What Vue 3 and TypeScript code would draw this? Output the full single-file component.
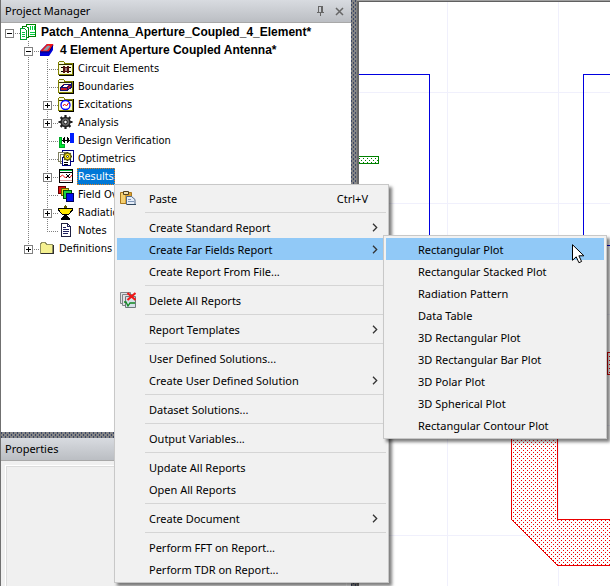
<script setup lang="ts">
import { ref } from 'vue'

interface TreeLeaf {
  label: string
  icon: string
  expandable: boolean
}

interface MenuEntry {
  label: string
  icon?: string
  shortcut?: string
  submenu?: string[]
  more?: boolean
}

const designItems: TreeLeaf[] = [
  { label: 'Circuit Elements', icon: 'circuit', expandable: false },
  { label: 'Boundaries', icon: 'boundaries', expandable: false },
  { label: 'Excitations', icon: 'excitations', expandable: true },
  { label: 'Analysis', icon: 'gear', expandable: true },
  { label: 'Design Verification', icon: 'verify', expandable: false },
  { label: 'Optimetrics', icon: 'optimetrics', expandable: false },
  { label: 'Results', icon: 'results', expandable: true },
  { label: 'Field Overlays', icon: 'overlays', expandable: false },
  { label: 'Radiation', icon: 'radiation', expandable: true },
  { label: 'Notes', icon: 'notes', expandable: false },
]

const plots: string[] = [
  'Rectangular Plot',
  'Rectangular Stacked Plot',
  'Radiation Pattern',
  'Data Table',
  '3D Rectangular Plot',
  '3D Rectangular Bar Plot',
  '3D Polar Plot',
  '3D Spherical Plot',
  'Rectangular Contour Plot',
]

const menuGroups: MenuEntry[][] = [
  [{ label: 'Paste', icon: 'paste', shortcut: 'Ctrl+V' }],
  [
    { label: 'Create Standard Report', more: true },
    { label: 'Create Far Fields Report', more: true, submenu: plots },
    { label: 'Create Report From File...' },
  ],
  [{ label: 'Delete All Reports', icon: 'delete' }],
  [{ label: 'Report Templates', more: true }],
  [{ label: 'User Defined Solutions...' }, { label: 'Create User Defined Solution', more: true }],
  [{ label: 'Dataset Solutions...' }],
  [{ label: 'Output Variables...' }],
  [{ label: 'Update All Reports' }, { label: 'Open All Reports' }],
  [{ label: 'Create Document', more: true }],
  [{ label: 'Perform FFT on Report...' }, { label: 'Perform TDR on Report...' }],
]

const selected = ref('Results')
const activeEntry = ref('Create Far Fields Report')
const activePlot = ref('Rectangular Plot')
</script>

<template>
  <div class="app">
    <div class="docks">
      <section class="dock">
        <header class="dock-title">
          <h2>Project Manager</h2>
          <button type="button" class="tool" aria-label="Auto hide">
            <svg width="9" height="10" viewBox="0 0 9 10" shape-rendering="crispEdges">
              <path d="M2 .5h5M2.500 0v6M5.500 0v6M6.500 0v6M1 6.500h7M4.500 7v3" fill="none" stroke="#666" />
            </svg>
          </button>
          <button type="button" class="tool" aria-label="Close">
            <svg width="9" height="9" viewBox="0 0 9 9">
              <path d="M1 1l7 7M8 1l-7 7" fill="none" stroke="#666" stroke-width="1.500" />
            </svg>
          </button>
        </header>

        <ul class="tree">
          <li>
            <div class="row">
              <button type="button" class="expander" aria-label="Collapse project">
                <svg width="9" height="9" viewBox="0 0 9 9" shape-rendering="crispEdges">
                  <path d="M.5.5h8v8h-8z" fill="#fff" stroke="#808080" /><path d="M2 4.500h5" stroke="#000" />
                </svg>
              </button>
              <svg class="icon" width="16" height="16" viewBox="0 0 16 16" shape-rendering="crispEdges">
                <path d="M6.500.5h9v12h-9z" fill="#fff" stroke="#008000" />
                <path d="M10 2h1v4h-1zM12 2h1v4h-1zM14 2h1v4h-1zM8 3h1v3h-1zM10 8h5v1h-5zM10 10h5v1h-5z" fill="#00d040" />
                <path d="M2.500 2.500h4l2 2v8.500h-6z" fill="#fff" stroke="#008000" />
                <path d="M.5 4.500h4l2 2v9h-6z" fill="#fff" stroke="#00a030" />
                <path d="M2 8h3v1h-3zM2 10h3v1h-3zM2 12h3v1h-3z" fill="#00c040" />
              </svg>
              <span class="label strong">Patch_Antenna_Aperture_Coupled_4_Element*</span>
            </div>
            <ul class="branch">
              <li>
                <div class="row">
                  <button type="button" class="expander" aria-label="Collapse design">
                    <svg width="9" height="9" viewBox="0 0 9 9" shape-rendering="crispEdges">
                      <path d="M.5.5h8v8h-8z" fill="#fff" stroke="#808080" /><path d="M2 4.500h5" stroke="#000" />
                    </svg>
                  </button>
                  <svg class="icon" width="16" height="16" viewBox="0 0 16 16">
                    <path d="M1 9L8 2h6v6l-4 6H1z" fill="#0000d8" />
                    <path d="M1 9.500L8 2h6.500L10 9.500z" fill="#f01818" />
                    <path d="M4 8.500l4-4.500c2-1.500 4 0 2.500 1.500L8 8.500z" fill="#8c98a8" />
                    <path d="M1 10h9l4-6.500" fill="none" stroke="#000070" />
                  </svg>
                  <span class="label strong">4 Element Aperture Coupled Antenna*</span>
                </div>
                <ul class="branch">
                  <li v-for="item in designItems" :key="item.label">
                    <div class="row">
                      <button v-if="item.expandable" type="button" class="expander" :aria-label="'Expand ' + item.label">
                        <svg width="9" height="9" viewBox="0 0 9 9" shape-rendering="crispEdges">
                          <path d="M.5.5h8v8h-8z" fill="#fff" stroke="#808080" /><path d="M2 4.500h5M4.500 2v5" stroke="#000" />
                        </svg>
                      </button>
                      <span v-else class="expander"></span>
                      <svg class="icon" width="16" height="16" viewBox="0 0 16 16" shape-rendering="crispEdges">
                        <template v-if="['circuit', 'boundaries', 'excitations'].includes(item.icon)">
                          <path d="M1 3h15v13H1z" fill="#000" />
                          <path d="M1 1h5v1h1v1h8v12H0V2h1z" fill="#808000" />
                          <path d="M1 2h5v2h8v10H1z" fill="#fbfbda" />
                          <path d="M1 4h13v1H1z" fill="#303000" />
                        </template>
                        <template v-if="item.icon === 'circuit'">
                          <path d="M5 6h2v1h2V6h2v7H9v-1H7v1H5z" fill="#501010" />
                          <path d="M7 8h2v3H7z" fill="#a08080" />
                          <path d="M3 7.500h2M3 11.500h2M11 7.500h2M11 11.500h2" stroke="#000" />
                        </template>
                        <template v-else-if="item.icon === 'boundaries'">
                          <path d="M2 12V9l4-3h7v3l-3 4H2z" fill="#c01828" />
                          <path d="M4 9h4l3-2H7z" fill="#fff" />
                          <path d="M2.500 12.500V9.500h7v3zM9.500 9.500l3.500-3v3l-3.500 3M2.500 9.500l4-3h6.500" fill="none" stroke="#101070" />
                        </template>
                        <template v-else-if="item.icon === 'excitations'">
                          <circle cx="7.500" cy="9" r="4.500" fill="#fff" stroke="#0000ff" stroke-width="1.300" shape-rendering="auto" />
                          <path d="M5 10l1.500-2 2 2 2-3" fill="none" stroke="#f00000" shape-rendering="auto" />
                        </template>
                        <template v-else-if="item.icon === 'gear'">
                          <g shape-rendering="auto">
                            <path d="M7.500 1v14M.5 8h14M2.600 3.100l9.800 9.800M12.400 3.100l-9.800 9.800" stroke="#202020" stroke-width="2.200" />
                            <circle cx="7.500" cy="8" r="4.500" fill="#686868" stroke="#202020" stroke-width="1.400" />
                            <circle cx="7.500" cy="8" r="1.800" fill="#fff" stroke="#202020" />
                          </g>
                        </template>
                        <template v-else-if="item.icon === 'verify'">
                          <path d="M1.500 5.500h2v7h3v3h-5z" fill="#00e830" stroke="#00a828" />
                          <path d="M12 1h4v10h-4z" fill="#0020ff" />
                          <path d="M4 8h8M6.500 5v6M9.500 5v6M5.500 6v4M10.500 6v4" stroke="#000" />
                        </template>
                        <template v-else-if="item.icon === 'optimetrics'">
                          <path d="M4.500.5h11v11h-11z" fill="#fff" stroke="#000080" />
                          <path d="M.5 2.500h8v9h-8zM2.500 4.500h8v9h-8z" fill="#fff" stroke="#808060" />
                          <path d="M4.500 7.500h8v8h-8z" fill="#fff" stroke="#000080" />
                          <path d="M6 12.500h4M6 14h4" stroke="#000" />
                          <g shape-rendering="auto">
                            <path d="M9.500 2v9M5 6.500h9M6.300 3.300l6.400 6.400M12.700 3.300l-6.400 6.400" stroke="#404000" stroke-width="2" />
                            <circle cx="9.500" cy="6.500" r="3.200" fill="#ffe820" stroke="#605800" />
                            <circle cx="9.500" cy="6.500" r="1" fill="#fff" stroke="#303000" />
                          </g>
                        </template>
                        <template v-else-if="item.icon === 'results'">
                          <path d="M1.500 1.500h13v13h-13z" fill="#fff" stroke="#000" />
                          <path d="M2 2.500h12" stroke="#00c040" /><path d="M2 4.500h12" stroke="#000" />
                          <path d="M2 9l2.500-2 3 3 2-2 2 2 2.500-3" fill="none" stroke="#f01010" shape-rendering="auto" />
                          <path d="M8 6l4 4M12 6L8 10" stroke="#000" shape-rendering="auto" />
                          <path d="M2 12.500h12" stroke="#e0a0a0" />
                        </template>
                        <template v-else-if="item.icon === 'overlays'">
                          <path d="M.5.5h7v7h-7z" fill="#e01010" stroke="#600000" />
                          <path d="M3.500 2.500h7v7h-7z" fill="#f0d020" stroke="#606000" />
                          <path d="M5.500 4.500h8v8h-8z" fill="#20d040" stroke="#005000" />
                          <path d="M8.500 7.500h7v8h-7z" fill="#0010f0" stroke="#000060" />
                        </template>
                        <template v-else-if="item.icon === 'radiation'">
                          <path d="M0 4h15v2l-3 4H3L0 6z" fill="#ffe800" />
                          <path d="M0 4.500h15M.5 5v1l3.500 4h7l3.500-4V5" fill="none" stroke="#000" />
                          <path d="M7 1h1v1h1v2H6V2h1z" fill="#605800" />
                          <path d="M6 10h3v2l3 2v2H3v-2l3-2z" fill="#000" />
                        </template>
                        <template v-else>
                          <path d="M3.500 1.500h6l3 3v10h-9z" fill="#fff" stroke="#202040" />
                          <path d="M9.500 1.500v3h3M5 5.500h3M5 7.500h6M5 9.500h6M5 11.500h5" fill="none" stroke="#202060" />
                        </template>
                      </svg>
                      <button
                        type="button"
                        class="label"
                        :class="{ selected: selected === item.label }"
                        @click="selected = item.label"
                      >{{ item.label }}</button>
                    </div>
                  </li>
                </ul>
              </li>
              <li>
                <div class="row">
                  <button type="button" class="expander" aria-label="Expand definitions">
                    <svg width="9" height="9" viewBox="0 0 9 9" shape-rendering="crispEdges">
                      <path d="M.5.5h8v8h-8z" fill="#fff" stroke="#808080" /><path d="M2 4.500h5M4.500 2v5" stroke="#000" />
                    </svg>
                  </button>
                  <svg class="icon" width="16" height="16" viewBox="0 0 16 16" shape-rendering="crispEdges">
                    <path d="M1.500 13V3.500h1v-1h4v1h1v1h6V13z" fill="#f4f090" stroke="#909060" />
                    <path d="M2 13.500h12.500V5" fill="none" stroke="#303030" />
                  </svg>
                  <button type="button" class="label">Definitions</button>
                </div>
              </li>
            </ul>
          </li>
        </ul>
      </section>

      <div class="splitter"></div>

      <section class="dock">
        <header class="dock-title"><h2>Properties</h2></header>
        <div class="props"><div class="well"></div></div>
      </section>
    </div>

    <div class="splitter vertical"></div>

    <main class="canvas">
      <svg width="100%" height="100%" shape-rendering="crispEdges" aria-label="Layout view">
        <defs>
          <pattern id="dots-red" width="4" height="4" patternUnits="userSpaceOnUse">
            <path d="M0 0h1v1H0zM2 2h1v1H2z" fill="#f00000" />
          </pattern>
          <pattern id="dots-green" width="4" height="4" patternUnits="userSpaceOnUse">
            <path d="M0 0h1v1H0zM2 2h1v1H2z" fill="#008000" />
          </pattern>
        </defs>
        <path
          d="M88.500 0V900M199.500 0V900M0 90.500H1600M0 201.500H1600M0 312.500H1600M0 423.500H1600M0 533.500H1600"
          stroke="#f0f0fc"
        />
        <path d="M0 72.500H70.500V243.500H0M1600 72.500H224.500V243.500H1600" fill="none" stroke="#0000e0" />
        <path d="M-2 154.500H19.500V161.500H-2z" fill="url(#dots-green)" stroke="#008000" />
        <path d="M1600 350.500H248.500V372.500H1600" fill="url(#dots-red)" stroke="#e00000" />
        <path
          d="M152.500 400V517.500L198.500 563.500H1600V517.500H198.500V400z"
          fill="url(#dots-red)"
          stroke="#e80000"
        />
      </svg>
    </main>

    <ul class="menu context" role="menu">
      <template v-for="(group, index) in menuGroups" :key="index">
        <li v-if="index > 0" class="separator" role="separator"></li>
        <li v-for="entry in group" :key="entry.label" class="entry">
          <button
            type="button"
            role="menuitem"
            class="item"
            :class="{ active: activeEntry === entry.label }"
            @click="activeEntry = entry.label"
          >
            <span class="gutter">
              <svg v-if="entry.icon === 'paste'" width="16" height="16" viewBox="0 0 16 16">
                <path d="M.5 2.500h11v11H.5z" fill="#dca030" stroke="#a87820" />
                <path d="M1 3h4v10H1z" fill="#f4d070" />
                <path d="M3.500 1.500h5v3h-5z" fill="#f0e0b0" stroke="#504020" />
                <path d="M6.500 6.500h5l3.500 3v5H6.500z" fill="#e4ecf8" stroke="#506888" />
                <path d="M8 9.500h3M8 11.500h6" stroke="#8098b8" />
                <path d="M7 14.500h9" stroke="#304860" />
              </svg>
              <svg v-else-if="entry.icon === 'delete'" width="16" height="16" viewBox="0 0 16 16">
                <path d="M.5.5h10v11H.5z" fill="#e0e0e4" stroke="#808488" />
                <path d="M2.500 2.500h10v11h-10z" fill="#e0e0e4" stroke="#808488" />
                <path d="M5.500 4.500h10v11h-10z" fill="#d4e0e8" stroke="#70787c" />
                <path d="M4 10h2l2 4 2-3h5" fill="none" stroke="#108820" stroke-width="1.300" />
                <path d="M7.500 1l8 7M15.500 1l-8 7" stroke="#f01818" stroke-width="2.200" />
              </svg>
            </span>
            <span class="text">{{ entry.label }}</span>
            <span v-if="entry.shortcut" class="shortcut">{{ entry.shortcut }}</span>
            <svg v-if="entry.more" class="chevron" width="6" height="9" viewBox="0 0 6 9">
              <path d="M1 .8l3.700 3.700L1 8.200" fill="none" stroke="#333" stroke-width="1.300" />
            </svg>
          </button>
          <ul v-if="entry.submenu && activeEntry === entry.label" class="menu sub" role="menu">
            <li v-for="plot in entry.submenu" :key="plot" class="entry">
              <button
                type="button"
                role="menuitem"
                class="item"
                :class="{ active: activePlot === plot }"
                @click="activePlot = plot"
              >
                <span class="gutter"></span>
                <span class="text">{{ plot }}</span>
              </button>
            </li>
          </ul>
        </li>
      </template>
    </ul>

    <svg class="pointer" width="13" height="20" viewBox="0 0 13 20">
      <path d="M.5.7v15.600l3.700-3.500 2.700 5.900 2.700-1.200-2.700-5.700h5z" fill="#fff" stroke="#000" />
    </svg>
  </div>
</template>

<style>
html,
body {
  overflow: hidden;
}
</style>

<style scoped>
.app {
  position: relative;
  display: flex;
  height: 100vh;
  overflow: hidden;
  background: #a0a0a0;
  color: #000;
  font-family: 'Noto Sans', 'Open Sans', sans-serif;
  font-size: 11px;
}

ul {
  margin: 0;
  padding: 0;
  list-style: none;
}

button {
  margin: 0;
  padding: 0;
  border: 0;
  background: none;
  color: inherit;
  font: inherit;
  text-align: left;
}

svg {
  display: block;
}

.docks {
  display: grid;
  flex: 0 0 351px;
  grid-template-rows: 1fr 6px 148px;
  box-sizing: border-box;
  border-left: 1px solid #707070;
}

.dock {
  display: flex;
  flex-direction: column;
  min-height: 0;
  background: #fff;
}

.dock-title {
  display: flex;
  flex: 0 0 23px;
  align-items: center;
  gap: 10px;
  box-sizing: border-box;
  padding: 0 7px 0 4px;
  border-bottom: 1px solid #a8a8a8;
  background: linear-gradient(#d8dbe0, #bbbec3);
}

.dock-title h2 {
  flex: 1;
  margin: 0;
  font-size: 11px;
  font-weight: 400;
  line-height: 22px;
}

.splitter {
  background:
    conic-gradient(at 1px 2px, transparent 75%, #3c4866 0) 0 0 / 4px 4px,
    conic-gradient(at 1px 2px, transparent 75%, #3c4866 0) 2px 2px / 4px 4px,
    #868686;
}

.splitter.vertical {
  flex: 0 0 6px;
}

.tree {
  flex: 1;
  overflow: hidden;
  font-family: 'DejaVu Sans Condensed', 'Noto Sans', sans-serif;
}

.row {
  position: relative;
  display: flex;
  align-items: center;
  height: 18px;
}

.row::before {
  position: absolute;
  top: 10px;
  left: 8px;
  width: 11px;
  height: 1px;
  background: repeating-linear-gradient(to right, #808080 0 1px, transparent 1px 2px);
  content: '';
}

.branch {
  position: relative;
  margin-left: 19px;
}

.branch::before {
  position: absolute;
  top: 0;
  bottom: 8px;
  left: 8px;
  width: 1px;
  background: repeating-linear-gradient(#808080 0 1px, transparent 1px 2px);
  content: '';
}

.expander {
  position: relative;
  flex: 0 0 19px;
  box-sizing: border-box;
  padding: 2px 0 0 4px;
}

.icon {
  position: relative;
  flex: 0 0 16px;
}

.label {
  margin-left: 3px;
  padding: 0 1px;
  line-height: 17px;
  white-space: nowrap;
}

.label.strong {
  margin-left: 4px;
  font-family: 'Liberation Sans', 'Noto Sans', sans-serif;
  font-size: 12px;
  font-weight: 700;
}

.label.selected {
  background: #0078d7;
  color: #fff;
  outline: 1px dotted #e08020;
  outline-offset: -1px;
}

.props {
  flex: 1;
  padding: 4px 4px 0;
  background: #f0f0f0;
}

.well {
  box-sizing: border-box;
  height: 100%;
  border: 1px solid #fff;
  border-bottom: 0;
  box-shadow: inset 1px 1px 0 #dcdcdc;
}

.canvas {
  flex: 1;
  min-width: 0;
  margin-top: 1px;
  border-top: 1px solid #606060;
  border-left: 2px solid #686868;
  background: #fff;
}

.menu {
  position: absolute;
  box-sizing: border-box;
  padding: 2px;
  border: 1px solid #c8c8c8;
  background: #f1f1f1;
  box-shadow: 3px 3px 3px rgba(0, 0, 0, 0.5);
}

.context {
  top: 184px;
  left: 114px;
  width: 275px;
}

.sub {
  top: -3px;
  left: calc(100% - 3px);
  width: 224px;
}

.entry {
  position: relative;
}

.item {
  display: flex;
  align-items: center;
  width: 100%;
  height: 22px;
}

.item.active {
  background: #91c9f7;
}

.gutter {
  flex: 0 0 29px;
  padding-left: 3px;
}

.text {
  flex: 1;
  white-space: nowrap;
}

.shortcut {
  padding-right: 18px;
}

.chevron {
  margin-right: 8px;
}

.separator {
  height: 1px;
  margin: 3px 0 3px 28px;
  background: #d5d5d5;
}

.pointer {
  position: absolute;
  top: 244px;
  left: 572px;
}
</style>
